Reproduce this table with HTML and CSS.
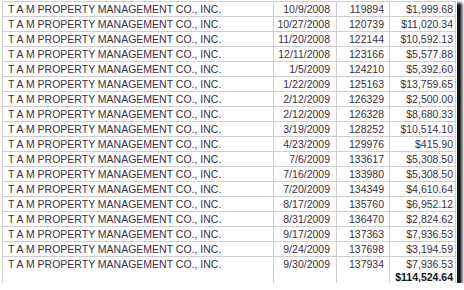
FILE: index.html
```html
<!DOCTYPE html>
<html lang="en">
<head>
    <meta charset="UTF-8">
    <title>T A M Property Management payments</title>
    <link rel="stylesheet" href="styles.css">
</head>
<body>

    <div class="frame">
        <table class="sheet">
            <colgroup>
                <col class="col-name">
                <col class="col-date">
                <col class="col-num">
                <col class="col-amt">
            </colgroup>
            <tr><td class="name">T A M PROPERTY MANAGEMENT CO., INC.</td><td class="date">10/9/2008</td><td class="num">119894</td><td class="amt">$1,999.68</td></tr>
            <tr><td class="name">T A M PROPERTY MANAGEMENT CO., INC.</td><td class="date">10/27/2008</td><td class="num">120739</td><td class="amt">$11,020.34</td></tr>
            <tr><td class="name">T A M PROPERTY MANAGEMENT CO., INC.</td><td class="date">11/20/2008</td><td class="num">122144</td><td class="amt">$10,592.13</td></tr>
            <tr><td class="name">T A M PROPERTY MANAGEMENT CO., INC.</td><td class="date">12/11/2008</td><td class="num">123166</td><td class="amt">$5,577.88</td></tr>
            <tr><td class="name">T A M PROPERTY MANAGEMENT CO., INC.</td><td class="date">1/5/2009</td><td class="num">124210</td><td class="amt">$5,392.60</td></tr>
            <tr><td class="name">T A M PROPERTY MANAGEMENT CO., INC.</td><td class="date">1/22/2009</td><td class="num">125163</td><td class="amt">$13,759.65</td></tr>
            <tr><td class="name">T A M PROPERTY MANAGEMENT CO., INC.</td><td class="date">2/12/2009</td><td class="num">126329</td><td class="amt">$2,500.00</td></tr>
            <tr><td class="name">T A M PROPERTY MANAGEMENT CO., INC.</td><td class="date">2/12/2009</td><td class="num">126328</td><td class="amt">$8,680.33</td></tr>
            <tr><td class="name">T A M PROPERTY MANAGEMENT CO., INC.</td><td class="date">3/19/2009</td><td class="num">128252</td><td class="amt">$10,514.10</td></tr>
            <tr><td class="name">T A M PROPERTY MANAGEMENT CO., INC.</td><td class="date">4/23/2009</td><td class="num">129976</td><td class="amt">$415.90</td></tr>
            <tr><td class="name">T A M PROPERTY MANAGEMENT CO., INC.</td><td class="date">7/6/2009</td><td class="num">133617</td><td class="amt">$5,308.50</td></tr>
            <tr><td class="name">T A M PROPERTY MANAGEMENT CO., INC.</td><td class="date">7/16/2009</td><td class="num">133980</td><td class="amt">$5,308.50</td></tr>
            <tr><td class="name">T A M PROPERTY MANAGEMENT CO., INC.</td><td class="date">7/20/2009</td><td class="num">134349</td><td class="amt">$4,610.64</td></tr>
            <tr><td class="name">T A M PROPERTY MANAGEMENT CO., INC.</td><td class="date">8/17/2009</td><td class="num">135760</td><td class="amt">$6,952.12</td></tr>
            <tr><td class="name">T A M PROPERTY MANAGEMENT CO., INC.</td><td class="date">8/31/2009</td><td class="num">136470</td><td class="amt">$2,824.62</td></tr>
            <tr><td class="name">T A M PROPERTY MANAGEMENT CO., INC.</td><td class="date">9/17/2009</td><td class="num">137363</td><td class="amt">$7,936.53</td></tr>
            <tr><td class="name">T A M PROPERTY MANAGEMENT CO., INC.</td><td class="date">9/24/2009</td><td class="num">137698</td><td class="amt">$3,194.59</td></tr>
            <tr class="last"><td class="name">T A M PROPERTY MANAGEMENT CO., INC.</td><td class="date">9/30/2009</td><td class="num">137934</td><td class="amt">$7,936.53</td></tr>
            <tr class="total"><td class="name"></td><td class="date"></td><td class="num"></td><td class="amt">$114,524.64</td></tr>
        </table>
    </div>

</body>
</html>
```

FILE: styles.css
```css
/* Base */
body {
    margin: 0;
    padding: 0;
    background: #fff;
    font-family: "Liberation Sans", Arial, sans-serif;
}

/* Picture frame with drop shadow */
.frame {
    width: 455px;
    height: 282px;
    padding: 1px 0 0 2px;
    background: #fff;
    overflow: hidden;
    box-shadow: 4px 4px 3px 1px #111;
}

/* Spreadsheet */
.sheet {
    border-collapse: collapse;
    table-layout: fixed;
    width: 453px;
    font-size: 10.5px;
    color: #3c3040;
}

.col-name { width: 271px; }
.col-date { width: 63px; }
.col-num  { width: 53px; }
.col-amt  { width: 66px; }

.sheet td {
    height: 13px;
    padding: 0 0 1px 0;
    line-height: 11px;
    vertical-align: bottom;
    white-space: nowrap;
    border: 1px solid #cfcfcf;
}

.sheet td.name { padding-left: 5px; }
.sheet td.date { text-align: right; padding-right: 6px; }
.sheet td.num  { text-align: right; padding-right: 5px; }
.sheet td.amt  { text-align: right; padding-right: 2px; }

.sheet tr.last td {
    border-bottom: none;
}

.sheet tr.total td {
    border-top: none;
    border-bottom: none;
    height: 12px;
}

.sheet tr.total td.amt {
    font-weight: bold;
    color: #111;
}
```
